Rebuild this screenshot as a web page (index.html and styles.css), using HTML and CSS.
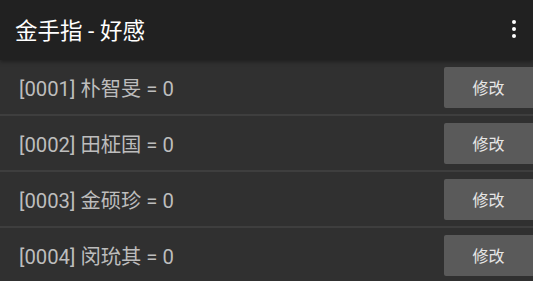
FILE: index.html
```html
<!DOCTYPE html>
<html lang="zh">
<head>
<meta charset="UTF-8">
<title>金手指 - 好感</title>
<link rel="stylesheet" href="styles.css">
</head>
<body>

<!-- TOOLBAR -->
<header class="toolbar">
  <h1>金手指 - 好感</h1>
  <div class="menu">
    <span></span><span></span><span></span>
  </div>
</header>

<!-- LIST -->
<div class="list">
  <div class="row">
    <span class="label">[0001] 朴智旻 = 0</span>
    <button>修改</button>
  </div>
  <div class="row">
    <span class="label">[0002] 田柾国 = 0</span>
    <button>修改</button>
  </div>
  <div class="row">
    <span class="label">[0003] 金硕珍 = 0</span>
    <button>修改</button>
  </div>
  <div class="row">
    <span class="label">[0004] 闵玧其 = 0</span>
    <button>修改</button>
  </div>
</div>

</body>
</html>
```

FILE: styles.css
```css
/* RESET */
*{
  margin:0;
  padding:0;
  box-sizing:border-box;
  font-family:Roboto, "Noto Sans CJK SC", sans-serif;
}

body{
  background:#303030;
  overflow:hidden;
}

/* TOOLBAR */
.toolbar{
  height:60px;
  background:#212121;
  display:flex;
  align-items:center;
  justify-content:space-between;
  padding:0 17px 2px 15px;
  box-shadow:0 2px 4px rgba(0,0,0,0.35);
  position:relative;
}

.toolbar h1{
  color:#fff;
  font-size:22.5px;
  font-weight:400;
}

.menu{
  display:flex;
  flex-direction:column;
  gap:3px;
}

.menu span{
  width:4px;
  height:4px;
  border-radius:50%;
  background:#fff;
}

/* LIST */
.row{
  height:56px;
  display:flex;
  align-items:center;
  justify-content:space-between;
  padding-left:19px;
  border-bottom:2px solid #3e3e3e;
}

.label{
  color:#bdbdbd;
  font-size:20.3px;
}

button{
  width:89px;
  height:41px;
  background:#5a5a5a;
  color:#e6e6e6;
  border:none;
  border-radius:2px 0 0 2px;
  font-size:16px;
}
```
